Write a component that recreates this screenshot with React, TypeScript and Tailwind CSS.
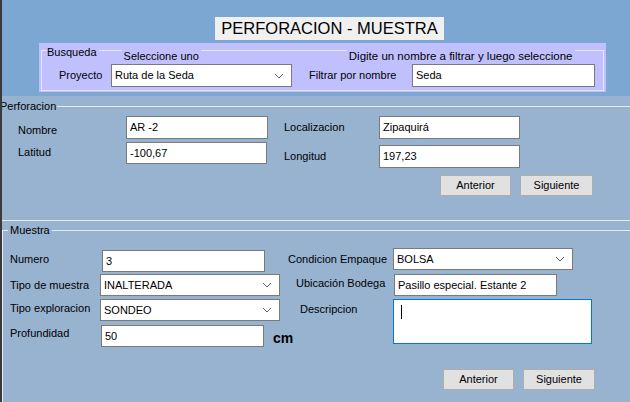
import React from 'react';

const font = { fontFamily: '"Liberation Sans", Arial, sans-serif' };

const Chevron: React.FC = () => (
  <svg width="10" height="6" viewBox="0 0 10 6" className="shrink-0">
    <polyline points="1,1 5,5 9,1" fill="none" stroke="#606060" strokeWidth="1" />
  </svg>
);

const Input: React.FC<{ value: string; w: string; h?: string }> = ({ value, w, h = 'h-[23px]' }) => (
  <div className={`${w} ${h} shrink-0 bg-white border border-[#7a7a7a] flex items-center px-[3px] text-[11px] text-black`}>
    {value}
  </div>
);

const Select: React.FC<{ value: string; w: string; h?: string }> = ({ value, w, h = 'h-[23px]' }) => (
  <div className={`${w} ${h} shrink-0 bg-white border border-[#7a7a7a] flex items-center justify-between pl-[3px] pr-[7px] text-[11px] text-black`}>
    <span>{value}</span>
    <Chevron />
  </div>
);

const Btn: React.FC<{ label: string; w: string }> = ({ label, w }) => (
  <div className={`${w} h-[21px] shrink-0 bg-[#e1e1e1] border border-[#adadad] flex items-center justify-center text-[11px] text-black`}>
    {label}
  </div>
);

export default function App() {
  return (
    <div style={font} className="w-[630px] h-[402px] overflow-hidden border-l-2 border-[#3a3a3a] bg-[#98b3d0] text-black">
      {/* Top area */}
      <div className="h-[96px] bg-[#7ba7d2] pt-[17px]">
        <div className="flex pl-[213px]">
          <div className="h-[23px] w-[229px] bg-[#f0f0f0] flex items-center justify-center text-[16.5px] text-black">
            PERFORACION - MUESTRA
          </div>
        </div>
        <div className="ml-[37px] mt-[3px] w-[567px] h-[49px] bg-[#c0c0ff] relative">
          <div className="absolute left-[2px] right-[2px] top-[7px] bottom-[1px] border border-[#e6e6ff]" />
          <div className="relative flex items-start text-[11px] h-[17px]">
            <span className="ml-[8px] mt-[1px] bg-[#c0c0ff] pr-[2px]">Busqueda</span>
            <span className="ml-[23px] mt-[5px] bg-[#c0c0ff] px-[2px]">Seleccione uno</span>
            <span className="ml-[146px] mt-[5px] bg-[#c0c0ff] px-[2px] text-[11.5px]">Digite un nombre a filtrar y luego seleccione</span>
          </div>
          <div className="relative flex items-center mt-[4px]">
            <span className="ml-[20px] w-[52px] text-[11px]">Proyecto</span>
            <Select value="Ruta de la Seda" w="w-[181px]" />
            <span className="ml-[17px] w-[103px] text-[11px]">Filtrar por nombre</span>
            <Input value="Seda" w="w-[183px]" />
          </div>
        </div>
      </div>

      {/* Perforacion */}
      <div className="h-[124px]">
        <div className="flex items-center h-[19px] pt-[1px]">
          <span className="text-[11px] -ml-[2px]">Perforacion</span>
          <div className="flex-1 h-px bg-[#e4ebf3] ml-[1px]" />
        </div>
        <div className="flex text-[11px]">
          <div className="ml-[16px] pt-[1px]">
            <div className="flex items-center">
              <span className="w-[108px] pt-[5px]">Nombre</span>
              <Input value="AR -2" w="w-[142px]" />
            </div>
            <div className="flex items-center mt-[3px]">
              <span className="w-[108px] -mt-[2px]">Latitud</span>
              <Input value="-100,67" w="w-[141px]" h="h-[22px]" />
            </div>
          </div>
          <div className="ml-[16px] pt-[1px]">
            <div className="flex items-center">
              <span className="w-[95px]">Localizacion</span>
              <Input value="Zipaquirá" w="w-[141px]" />
            </div>
            <div className="flex items-center mt-[6px]">
              <span className="w-[95px]">Longitud</span>
              <Input value="197,23" w="w-[141px]" />
            </div>
          </div>
        </div>
        <div className="flex justify-end gap-[9px] pr-[37px] mt-[7px]">
          <Btn label="Anterior" w="w-[71px]" />
          <Btn label="Siguiente" w="w-[73px]" />
        </div>
      </div>

      <div className="h-px bg-[#e4ebf3]" />

      {/* Muestra */}
      <div className="mt-[2px] flex items-center h-[14px]">
        <div className="w-[6px] h-px bg-[#e4ebf3] mt-[1px]" />
        <span className="text-[11px] px-[2px]">Muestra</span>
        <div className="flex-1 h-px bg-[#e4ebf3] mt-[1px]" />
      </div>
      <div className="border-l border-[#e4ebf3] h-[180px] -mt-[6px] pt-[19px] text-[11px]">
        <div className="flex">
          <div className="ml-[7px] w-[278px] shrink-0">
            <div className="flex items-center">
              <span className="w-[92px] shrink-0 -mt-[4px]">Numero</span>
              <Input value="3" w="w-[163px]" h="h-[22px]" />
            </div>
            <div className="flex items-center mt-[2px]">
              <span className="w-[90px] shrink-0">Tipo de muestra</span>
              <Select value="INALTERADA" w="w-[180px]" h="h-[22px]" />
            </div>
            <div className="flex items-center mt-[3px]">
              <span className="w-[90px] shrink-0 -mt-[3px]">Tipo exploracion</span>
              <Select value="SONDEO" w="w-[180px]" h="h-[22px]" />
            </div>
            <div className="flex items-center mt-[2px]">
              <span className="w-[91px] shrink-0 -mt-[6px]">Profundidad</span>
              <Input value="50" w="w-[163px]" h="h-[22px]" />
              <span className="ml-[9px] mt-[5px] shrink-0 text-[14px] font-bold">cm</span>
            </div>
          </div>
          <div className="-mt-[2px]">
            <div className="flex items-center">
              <span className="w-[105px] shrink-0">Condicion Empaque</span>
              <Select value="BOLSA" w="w-[180px]" h="h-[22px]" />
            </div>
            <div className="flex items-center mt-[4px]">
              <span className="w-[98px] shrink-0 ml-[8px] -mt-[4px]">Ubicación Bodega</span>
              <Input value="Pasillo especial. Estante 2" w="w-[163px]" h="h-[22px]" />
            </div>
            <div className="flex items-start mt-[3px]">
              <span className="w-[93px] shrink-0 ml-[12px] mt-[2px]">Descripcion</span>
              <div className="w-[199px] h-[45px] shrink-0 bg-white border border-[#0078d7] pl-[7px] pt-[5px]">
                <div className="w-px h-[14px] bg-black" />
              </div>
            </div>
          </div>
        </div>
        <div className="flex justify-end gap-[9px] pr-[35px] mt-[20px]">
          <Btn label="Anterior" w="w-[71px]" />
          <Btn label="Siguiente" w="w-[72px]" />
        </div>
      </div>
    </div>
  );
}
